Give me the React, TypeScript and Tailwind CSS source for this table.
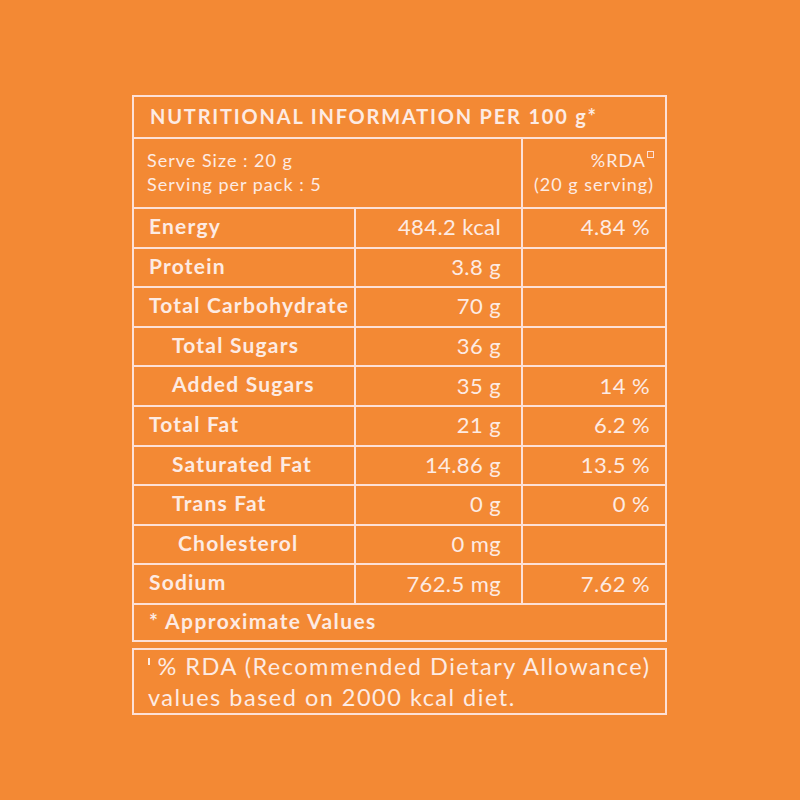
import React from "react";

type Row = {
  label: string;
  value: string;
  rda?: string;
  indent?: "sub" | "deep";
};

const rows: Row[] = [
  { label: "Energy", value: "484.2 kcal", rda: "4.84 %" },
  { label: "Protein", value: "3.8 g" },
  { label: "Total Carbohydrate", value: "70 g" },
  { label: "Total Sugars", value: "36 g", indent: "sub" },
  { label: "Added Sugars", value: "35 g", rda: "14 %", indent: "sub" },
  { label: "Total Fat", value: "21 g", rda: "6.2 %" },
  { label: "Saturated Fat", value: "14.86 g", rda: "13.5 %", indent: "sub" },
  { label: "Trans Fat", value: "0 g", rda: "0 %", indent: "sub" },
  { label: "Cholesterol", value: "0 mg", indent: "deep" },
  { label: "Sodium", value: "762.5 mg", rda: "7.62 %" },
];

const NutritionRow = ({ row }: { row: Row }) => {
  const pad =
    row.indent === "sub" ? "pl-[38px]" : row.indent === "deep" ? "pl-[44px]" : "pl-[15px]";

  return (
    <div className="grid grid-cols-[222px_167px_1fr] h-[39.6px] border-b-2 border-[#fde0d6]">
      <div
        className={`flex items-center border-r-2 border-[#fde0d6] font-bold text-[21px] tracking-[1.2px] pb-1 ${pad}`}
      >
        {row.label}
      </div>
      <div className="flex items-center justify-end border-r-2 border-[#fde0d6] pr-[20px] text-[22px] tracking-[0.4px] pb-0.5">
        {row.value}
      </div>
      <div className="flex items-center justify-end pr-[15px] text-[22px] tracking-[0.4px] pb-0.5">
        {row.rda}
      </div>
    </div>
  );
};

export default function App() {
  return (
    <div
      className="min-h-[800px] w-full bg-[#f38934] text-[#fdebe3] pt-[95px]"
      style={{ fontFamily: "Lato, 'Open Sans', sans-serif" }}
    >
      <div className="w-[535px] ml-[132px]">
        <div className="border-2 border-[#fde0d6]">
          <div className="h-[42px] border-b-2 border-[#fde0d6] flex items-center pl-[16px] font-bold text-[20px] tracking-[1.8px] pb-0.5">
            NUTRITIONAL INFORMATION PER 100 g*
          </div>

          <div className="grid grid-cols-[389px_1fr] h-[70px] border-b-2 border-[#fde0d6]">
            <div className="border-r-2 border-[#fde0d6] pl-[13px] pt-[9px] text-[18px] tracking-[1px] leading-[24px]">
              <div>Serve Size : 20 g</div>
              <div>Serving per pack : 5</div>
            </div>
            <div className="pr-[11px] pt-[9px] text-[18px] tracking-[1px] leading-[24px] text-right">
              <div>
                %RDA
                <span className="inline-block align-top mt-[3px] ml-[1px] w-[7px] h-[7px] border border-[#fde0d6]"></span>
              </div>
              <div>(20 g serving)</div>
            </div>
          </div>

          {rows.map((row) => (
            <NutritionRow key={row.label} row={row} />
          ))}

          <div className="h-[35px] flex items-center pl-[15px] font-bold text-[21px] tracking-[1.4px] pb-1">
            * Approximate Values
          </div>
        </div>

        <div className="mt-[6px] border-2 border-[#fde0d6] h-[67px] pl-[14px] pt-[1px] text-[23.5px] tracking-[1.5px] leading-[31px]">
          <div>
            <span className="inline-block align-top mt-[7px] mr-[8px] w-[1.5px] h-[7px] bg-[#fdebe3]"></span>
            % RDA (Recommended Dietary Allowance)
          </div>
          <div>values based on 2000 kcal diet.</div>
        </div>
      </div>
    </div>
  );
}
